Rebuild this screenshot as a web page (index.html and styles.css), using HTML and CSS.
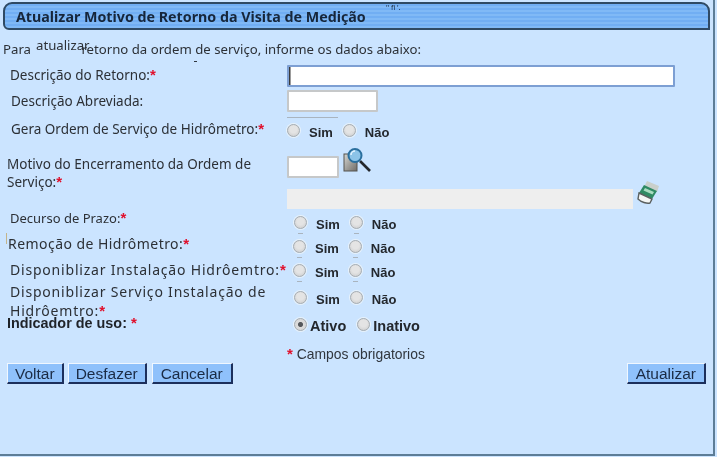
FILE: index.html
```html
<!DOCTYPE html>
<html lang="pt-BR">
<head>
<meta charset="utf-8">
<title>Atualizar Motivo de Retorno da Visita de Medição</title>
<link rel="stylesheet" href="styles.css">
</head>
<body>
<form class="page">
  <h1 class="title">Atualizar Motivo de Retorno da Visita de Medição<span class="title-ghost">'' fi '.</span></h1>
  <p class="intro">Para <span class="intro-gap"></span>retorno da ordem de serviço, informe os dados abaixo:<span class="intro-word">atualizar</span><i class="speck"></i></p>

  <div class="row row-desc">
    <label class="label">Descrição do Retorno:<b class="req">*</b></label>
    <input class="field field-long field-focus" type="text">
  </div>
  <div class="row row-abbr">
    <label class="label label-shift">Descrição Abreviada:</label>
    <input class="field field-mid" type="text">
  </div>
  <div class="row row-gera">
    <label class="label label-shift">Gera Ordem de Serviço de Hidrômetro:<b class="req">*</b></label>
    <div class="choices choices-gera">
      <span class="choice"><input class="radio" type="radio" name="gera"><span class="opt">Sim</span></span>
      <span class="choice"><input class="radio" type="radio" name="gera"><span class="opt">Não</span></span>
    </div>
  </div>
  <div class="row row-motivo">
    <label class="label label-wrap">Motivo do Encerramento da Ordem de Serviço:<b class="req">*</b></label>
    <div class="lookup">
      <input class="field field-short" type="text">
      <svg class="icon-search" width="29" height="25" viewBox="0 0 29 25" aria-hidden="true">
        <defs><linearGradient id="pg" x1="0" y1="0" x2="1" y2="1"><stop offset="0" stop-color="#d6d6d2"/><stop offset="1" stop-color="#6f6c67"/></linearGradient></defs>
        <rect x="1" y="7" width="13" height="17" fill="url(#pg)" stroke="#55524e"/>
        <line x1="17" y1="14" x2="27" y2="24" stroke="#23272c" stroke-width="2.6"/>
        <circle cx="12" cy="8.500" r="6.500" fill="#8cc4e8" stroke="#2a6f9e" stroke-width="2"/>
        <path d="M8 8a4 4 0 0 1 4-4" fill="none" stroke="#e4f4ff" stroke-width="1.500"/>
      </svg>
    </div>
  </div>
  <div class="row row-grey">
    <input class="field-grey" type="text" disabled>
    <svg class="icon-eraser" width="24" height="26" viewBox="0 0 24 26" aria-hidden="true">
      <path d="M10 2l12 5-2 6-13-5z" fill="#c9cfcb"/>
      <path d="M7 6l13 6-5 8-13-6z" fill="#2f8a63"/>
      <path d="M8 9l9 4-1.500 2.500-9-4z" fill="#a9dcc0"/>
      <path d="M2 14l13 6-2 4c-3 1-9-1-12-4z" fill="#f4f6f5" stroke="#5a5f5f" stroke-width="1.400"/>
    </svg>
  </div>

  <div class="row row-decurso">
    <label class="label label-decurso">Decurso de Prazo:<b class="req">*</b></label>
    <div class="choices choices-a ticks">
      <span class="choice"><input class="radio" type="radio" name="dec"><span class="opt">Sim</span></span>
      <span class="choice"><input class="radio" type="radio" name="dec"><span class="opt">Não</span></span>
    </div>
  </div>
  <div class="row row-remocao">
    <label class="label label-remocao">Remoção de Hidrômetro:<b class="req">*</b></label>
    <div class="choices choices-b ticks">
      <span class="choice"><input class="radio" type="radio" name="rem"><span class="opt">Sim</span></span>
      <span class="choice"><input class="radio" type="radio" name="rem"><span class="opt">Não</span></span>
    </div>
  </div>
  <div class="row row-disp">
    <label class="label label-wide">Disponiblizar Instalação Hidrôemtro:<b class="req">*</b></label>
    <div class="choices choices-c ticks">
      <span class="choice"><input class="radio" type="radio" name="disp"><span class="opt">Sim</span></span>
      <span class="choice"><input class="radio" type="radio" name="disp"><span class="opt">Não</span></span>
    </div>
  </div>
  <div class="row row-serv">
    <label class="label label-wide label-wrap-wide">Disponiblizar Serviço Instalação de Hidrôemtro:<b class="req">*</b></label>
    <div class="choices choices-a">
      <span class="choice"><input class="radio" type="radio" name="serv"><span class="opt">Sim</span></span>
      <span class="choice"><input class="radio" type="radio" name="serv"><span class="opt">Não</span></span>
    </div>
  </div>
  <div class="row row-uso">
    <label class="label label-uso">Indicador de uso: <b class="req">*</b></label>
    <div class="choices choices-uso">
      <span class="choice"><input class="radio" type="radio" name="uso" checked><span class="opt">Ativo</span></span>
      <span class="choice"><input class="radio" type="radio" name="uso"><span class="opt">Inativo</span></span>
    </div>
  </div>

  <p class="note"><b class="req">*</b> Campos obrigatorios</p>

  <div class="actions">
    <div class="actions-left">
      <button class="btn" type="button">Voltar</button>
      <button class="btn" type="button">Desfazer</button>
      <button class="btn btn-wide btn-last" type="button">Cancelar</button>
    </div>
    <button class="btn btn-wide" type="button">Atualizar</button>
  </div>
</form>
</body>
</html>
```

FILE: styles.css
```css
* { box-sizing: border-box; }

html, body {
  margin: 0;
  height: 100%;
  background: #cbe4ff;
}

body {
  overflow: hidden;
  font-family: "Noto Sans", "DejaVu Sans", sans-serif;
  font-size: 13.500px;
  color: #2c3036;
}

.page {
  position: relative;
  width: 715px;
  height: 456px;
  padding: 2px 0 0 3px;
  border-right: 2px solid #5d7d97;
  border-bottom: 2px solid #5d7d97;
  filter: blur(0.4px);
}

.title {
  position: relative;
  margin: 0;
  width: 707px;
  height: 28px;
  padding: 4px 0 0 11px;
  font-size: 14.250px;
  line-height: 18px;
  font-weight: bold;
  color: #16263a;
  border: 2px solid #2f4a64;
  border-radius: 9px 9px 0 6px;
  background: repeating-linear-gradient(180deg, #71aef3 0 2px, #80b9f6 2px 4px);
}

.title-ghost {
  position: absolute;
  left: 381px;
  top: 0;
  font-size: 7px;
  line-height: 8px;
  font-weight: normal;
}

.intro {
  position: relative;
  margin: 0;
  height: 35px;
  padding-top: 11px;
  line-height: 16px;
  font-size: 13.200px;
}

.intro-gap {
  display: inline-block;
  width: 47px;
}

.intro-word {
  position: absolute;
  left: 33px;
  top: 7px;
  line-height: 16px;
}

.speck {
  position: absolute;
  left: 191px;
  top: 31px;
  width: 3px;
  height: 1px;
  background: #30363e;
}

.row {
  display: flex;
  align-items: flex-start;
  padding-left: 284px;
  position: relative;
}

.label {
  position: absolute;
  left: 7px;
  top: 0;
  white-space: nowrap;
  line-height: 18px;
}

.label-shift { left: 8px; }
.label-wrap {
  left: 4px;
  width: 262px;
  white-space: normal;
  line-height: 18px;
}
.label-decurso { left: 7px; font-size: 13px; }
.label-remocao { left: 5px; font-size: 14px; letter-spacing: 0.450px; }
.label-remocao::before {
  content: "";
  position: absolute;
  left: -2px;
  top: -2px;
  width: 1px;
  height: 11px;
  background: #c4b48a;
}
.label-wide { left: 7px; font-size: 14px; letter-spacing: 0.800px; }
.label-wrap-wide {
  width: 278px;
  white-space: normal;
  line-height: 19px;
}
.label-uso {
  left: 4px;
  font-weight: bold;
  font-family: "Liberation Sans", Arial, sans-serif;
  font-size: 14.400px;
  color: #1f2329;
}

.req {
  font-family: "Liberation Sans", Arial, sans-serif;
  font-size: 15px;
  line-height: 0;
  font-weight: bold;
  letter-spacing: 0;
  color: #e0102c;
}

.field {
  display: block;
  height: 22px;
  background: #fff;
  border: 2px solid #c6c8c9;
  border-radius: 1px;
  padding: 0 2px;
}

.field-long { width: 388px; }
.field-focus { border-color: #7d9fd3; box-shadow: inset 2px 0 0 -0.500px #3a3a3a; }
.field-mid { width: 91px; }
.field-short { width: 52px; }

.field-grey {
  display: block;
  width: 346px;
  height: 20px;
  border: 0;
  background: #eeeeee;
}

.row-desc { height: 25px; }
.row-desc .label { top: 1px; }
.row-abbr { height: 28px; }
.row-abbr .label { top: 2px; }
.row-gera { height: 38px; }
.row-gera .label { top: 2px; }
.row-motivo { height: 33px; }
.row-motivo .label { top: -1px; }
.row-grey { height: 20px; }
.row-decurso { height: 25px; }
.row-decurso .label { top: 0; }
.row-remocao { height: 25px; }
.row-remocao .label { top: 1px; }
.row-disp { height: 26px; }
.row-disp .label { top: 2px; }
.row-serv { height: 27px; }
.row-serv .label { top: -3px; }
.row-uso { height: 31px; }
.row-uso .label { top: 2px; }

.row-gera::before {
  content: "";
  position: absolute;
  left: 284px;
  top: -1px;
  width: 51px;
  height: 1px;
  background: #a9b4bf;
}

.row-gera .choices { margin-top: 4px; }
.row-decurso .choices { margin-top: 5px; }
.row-remocao .choices { margin-top: 4px; }
.row-disp .choices { margin-top: 3px; }
.row-serv .choices { margin-top: 4px; }
.row-uso .choices { margin-top: 4px; }

.lookup { display: flex; align-items: flex-start; }
.icon-search { margin: -9px 0 0 4px; }

.icon-eraser { margin: -10px 0 0 4px; }

.choices {
  display: flex;
  align-items: center;
  height: 20px;
}

.choice { display: flex; align-items: center; position: relative; }

.ticks .choice::after {
  content: "";
  position: absolute;
  left: 4px;
  top: 16px;
  width: 5px;
  height: 1px;
  background: #a9b4bf;
}

.radio {
  appearance: none;
  flex: none;
  width: 13px;
  height: 13px;
  margin: -4px 0 0 0;
  border-radius: 50%;
  border: 1px solid #a9adb0;
  background: radial-gradient(circle at 50% 40%, #e4e4e4 0 40%, #c8c9ca 100%);
  box-shadow: 0 0 0 1px #e8f2fb;
}

.radio:checked {
  background: radial-gradient(circle, #55585c 0 27%, #dcdcdc 38%, #d4d4d4 100%);
}

.opt {
  font-family: "Liberation Sans", Arial, sans-serif;
  font-size: 13px;
  font-weight: bold;
  color: #24282e;
  margin-left: 9px;
}

.choices-gera .choice + .choice { margin-left: 10px; }
.choices-a { padding-left: 7px; }
.choices-a .choice + .choice { margin-left: 10px; }
.choices-b, .choices-c { padding-left: 6px; }
.choices-b .choice + .choice,
.choices-c .choice + .choice { margin-left: 10px; }
.choices-uso { padding-left: 7px; }
.choices-uso .opt { font-size: 14.500px; margin-left: 3px; }
.choices-uso .choice + .choice { margin-left: 11px; }

.note {
  margin: 4px 0 0;
  padding-left: 284px;
  height: 15px;
  line-height: 15px;
  font-family: "Liberation Sans", Arial, sans-serif;
  font-size: 13.900px;
  color: #30363e;
}

.actions {
  display: flex;
  justify-content: space-between;
  width: 703px;
  padding-left: 4px;
  margin-top: 1px;
}

.actions-left { display: flex; gap: 4px; }

.btn {
  height: 21px;
  padding: 0 7px;
  font-family: "Liberation Sans", Arial, sans-serif;
  font-size: 15.500px;
  line-height: 17px;
  color: #1b2b44;
  background: #8fc1fb;
  border: 1px solid;
  border-color: #f0f7ff #1c2f5c #1c2f5c #f0f7ff;
  border-width: 1px 2px 2px 1px;
}

.btn-wide { padding: 0 8px; }
.btn-last { margin-left: 1px; }
```
